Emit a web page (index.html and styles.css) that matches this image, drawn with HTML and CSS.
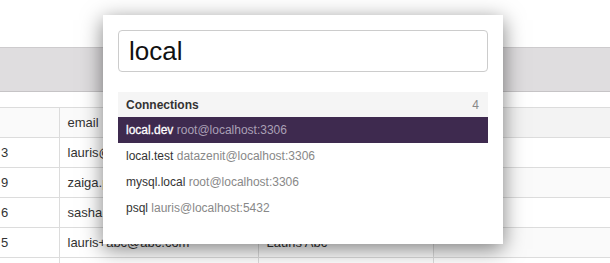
FILE: index.html
```html
<!DOCTYPE html>
<html>
<head>
    <title>Connections</title>
    <link rel="stylesheet" href="styles.css">
</head>
<body>
    <div class="app">
        <div class="toolbar"></div>

        <table class="grid">
            <colgroup>
                <col class="col-id">
                <col class="col-email">
                <col class="col-name">
                <col>
            </colgroup>
            <thead>
                <tr>
                    <th></th>
                    <th>email</th>
                    <th></th>
                    <th class="sorted"></th>
                </tr>
            </thead>
            <tbody>
                <tr><td>3</td><td>lauris@datazenit.com</td><td></td><td></td></tr>
                <tr><td>9</td><td>zaiga.p@datazenit.com</td><td></td><td></td></tr>
                <tr><td>6</td><td>sasha@datazenit.com</td><td></td><td></td></tr>
                <tr><td>5</td><td>lauris+abc@abc.com</td><td>Lauris Abc</td><td></td></tr>
                <tr><td></td><td></td><td></td><td></td></tr>
            </tbody>
        </table>

        <div class="switcher">
            <input class="search" type="text" value="local">

            <div class="group-head">
                <span class="group-title">Connections</span>
                <span class="group-count">4</span>
            </div>
            <ul class="results">
                <li class="active"><span class="name">local.dev</span> <span class="host">root@localhost:3306</span></li>
                <li><span class="name">local.test</span> <span class="host">datazenit@localhost:3306</span></li>
                <li><span class="name">mysql.local</span> <span class="host">root@localhost:3306</span></li>
                <li><span class="name">psql</span> <span class="host">lauris@localhost:5432</span></li>
            </ul>
        </div>
    </div>
</body>
</html>
```

FILE: styles.css
```css
html, body {
    margin: 0;
    padding: 0;
    background: white;
    font-family: "Liberation Sans", Arial, sans-serif;
    color: #333;
    overflow: hidden;
}
.app {
    position: relative;
    width: 610px;
    height: 263px;
    padding-top: 47px;
    box-sizing: border-box;
    overflow: hidden;
}
.toolbar {
    height: 43px;
    background: #dfdddf;
    border-top: 1px solid #cdcbcd;
    border-bottom: 1px solid #c6c4c6;
    margin-bottom: 15px;
}
.grid {
    border-collapse: collapse;
    table-layout: fixed;
    width: 640px;
    font-size: 13px;
}
.col-id {
    width: 59px;
}
.col-email {
    width: 199px;
}
.col-name {
    width: 175px;
}
.grid th,
.grid td {
    height: 29px;
    padding: 0 8px;
    border: 1px solid #dcdcdc;
    text-align: left;
    white-space: nowrap;
    overflow: hidden;
    color: #333;
}
.grid th {
    font-weight: normal;
    background: #fafafa;
}
.grid th.sorted {
    background: #f3f3f3;
}
.grid th:first-child,
.grid td:first-child {
    border-left: none;
    padding-left: 1px;
}
.grid tbody tr:nth-child(2) td:last-child,
.grid tbody tr:nth-child(4) td:last-child {
    background: #fafafa;
}

/* connection switcher */
.switcher {
    position: absolute;
    left: 103px;
    top: 15px;
    width: 400px;
    height: 229px;
    box-sizing: border-box;
    padding: 15px;
    background: white;
    box-shadow: 0 5px 20px rgba(0,0,0,0.5);
}
.search {
    display: block;
    width: 100%;
    height: 42px;
    box-sizing: border-box;
    margin: 0 0 20px 0;
    padding: 0 10px;
    border: 1px solid #cccccc;
    border-radius: 4px;
    font-family: "Liberation Sans", Arial, sans-serif;
    font-size: 26px;
    color: #111;
    outline: none;
}
.group-head {
    display: flex;
    justify-content: space-between;
    align-items: center;
    height: 25px;
    padding: 0 9px 0 8px;
    background: #f5f5f5;
    font-size: 12px;
}
.group-title {
    font-weight: bold;
    color: #333;
}
.group-count {
    color: #888;
}
.results {
    list-style: none;
    margin: 0;
    padding: 0;
}
.results li {
    height: 26px;
    line-height: 26px;
    padding: 0 8px;
    font-size: 12px;
    color: #333;
    white-space: nowrap;
}
.results .host {
    color: #888;
}
.results li.active {
    background: #3e2a4f;
}
.results li.active .name {
    color: white;
    -webkit-text-stroke: 0.3px white;
}
.results li.active .host {
    color: #aaa0b5;
}
```
